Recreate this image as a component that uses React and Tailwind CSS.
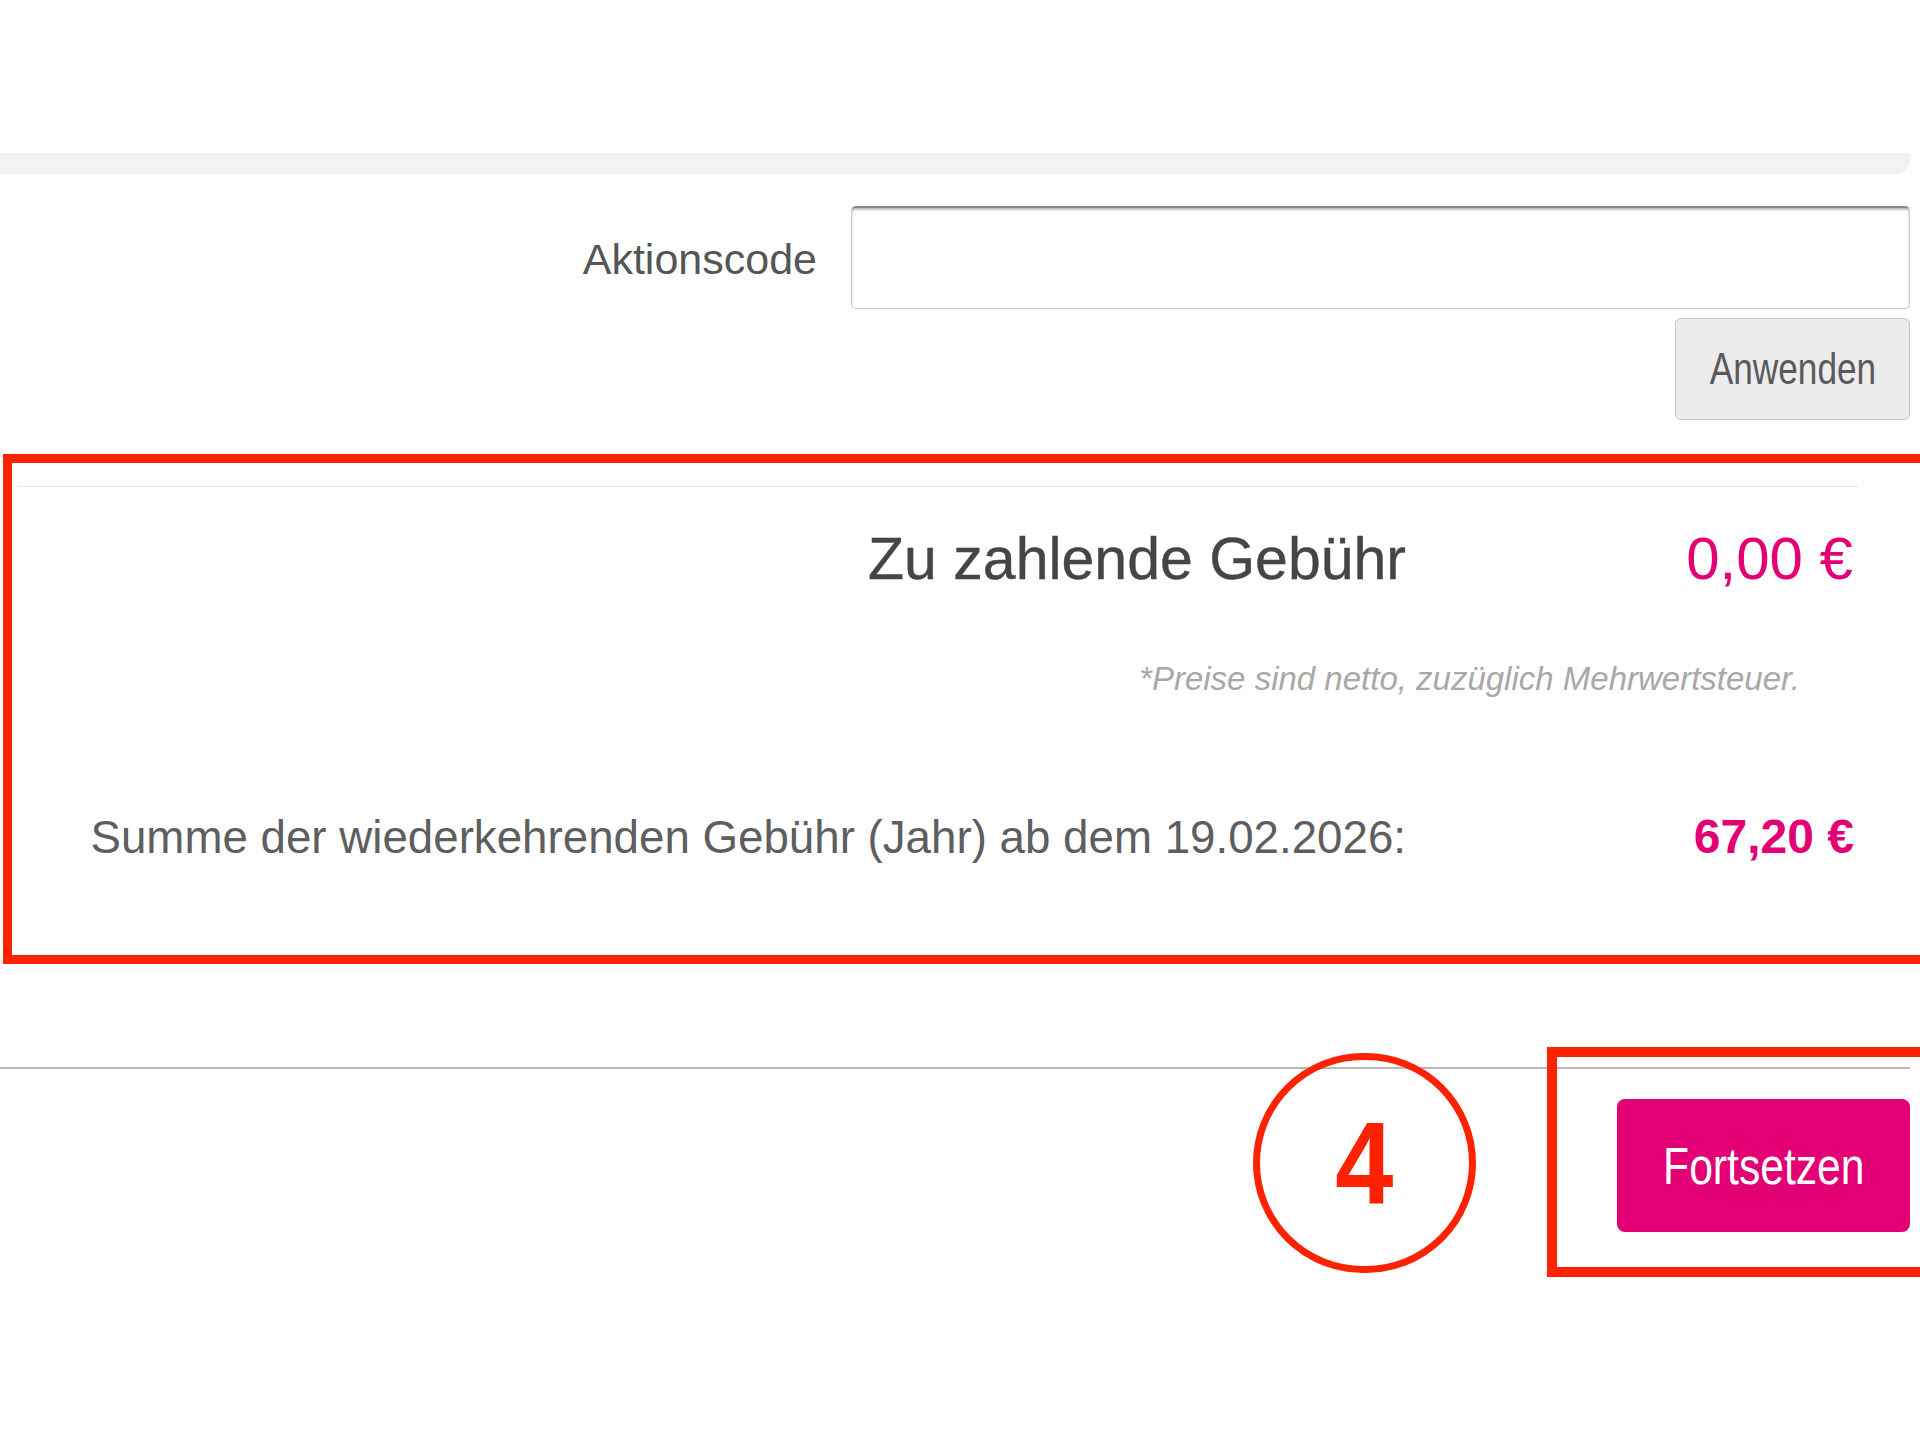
import React from "react";

export default function App() {
  return (
    <div className="relative w-[1920px] h-[1440px] overflow-hidden bg-white font-['Liberation_Sans',Arial,sans-serif]">
      <div className="pt-[153px] pr-[10px]">
        {/* gray bar */}
        <div className="h-[21px] bg-[#f2f2f2] rounded-br-[14px]" />

        {/* Aktionscode row */}
        <div className="mt-[32px] grid grid-cols-[817px_1fr] gap-x-[34px] items-center">
          <label className="pt-[3px] text-right text-[43px] leading-none text-[#555555]">Aktionscode</label>
          <input
            type="text"
            className="h-[103px] w-full rounded-[5px] border border-[#c9c9c9] border-t-[#8a8a8a] border-t-2 bg-white shadow-[inset_0_2px_2px_rgba(0,0,0,0.25)] outline-none"
          />
        </div>
        <div className="mt-[9px] flex justify-end">
          <button className="h-[102px] w-[235px] rounded-[6px] border border-[#c4c4c4] bg-[#ececec] text-[44px] leading-none text-[#5a5a5a]">
            <span className="inline-block scale-x-[0.8]">Anwenden</span>
          </button>
        </div>

        {/* summary */}
        <div className="mt-[66px] ml-[18px] mr-[53px] border-t border-dotted border-[#c8c8c8] pt-[42px]">
          <div className="flex items-baseline justify-end">
            <span className="text-[59px] leading-none text-[#454545] [-webkit-text-stroke:0.4px_#454545]">Zu zahlende Gebühr</span>
            <span className="w-[451px] pr-[4px] text-right text-[60px] leading-none text-[#e20074]">0,00 €</span>
          </div>
          <div className="mt-[73px] pr-[57px] text-right text-[33px] italic leading-none text-[#a8a8a8]">
            *Preise sind netto, zuzüglich Mehrwertsteuer.
          </div>
          <div className="mt-[118px] flex items-baseline justify-end">
            <span className="text-[45.7px] leading-none text-[#5e5e5e]">Summe der wiederkehrenden Gebühr (Jahr) ab dem 19.02.2026:</span>
            <span className="w-[451px] pr-[3px] text-right text-[48px] font-bold leading-none text-[#e20074]">67,20 €</span>
          </div>
        </div>

        {/* separator */}
        <div className="mt-[206px] h-[2px] bg-[#b8b8b8]" />

        <div className="mt-[30px] flex justify-end">
          <button className="h-[133px] w-[293px] rounded-[8px] bg-[#e20074] text-[52px] leading-none text-white">
            <span className="inline-block scale-x-[0.82]">Fortsetzen</span>
          </button>
        </div>
      </div>

      {/* annotations */}
      <div className="absolute left-[3px] top-[454px] h-[510px] w-[1960px] border-[9px] border-[#ff2200]" />
      <div className="absolute left-[1547px] top-[1047px] h-[230px] w-[420px] border-[10px] border-[#ff2200]" />
      <div className="absolute left-[1253px] top-[1053px] flex h-[220px] w-[223px] items-center justify-center rounded-full border-[7px] border-[#ff2200]">
        <span className="inline-block scale-x-[0.9] text-[116px] font-bold leading-none text-[#ff2200]">4</span>
      </div>
    </div>
  );
}
